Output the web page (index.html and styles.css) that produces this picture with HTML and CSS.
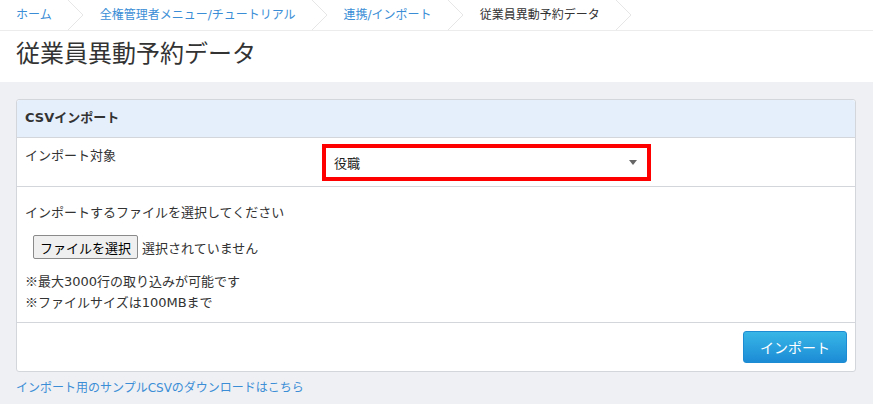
FILE: index.html
```html
<!DOCTYPE html>
<html lang="ja">
<head>
<meta charset="utf-8">
<link rel="stylesheet" href="styles.css">
</head>
<body>
<div class="top">
  <ol class="crumbs">
    <li><a href="#">ホーム</a><svg class="chev" width="15" height="30" viewBox="0 0 15 30"><path d="M0 0 L15 15 L0 30" fill="none" stroke="#e6e6e6" stroke-width="1"/></svg></li>
    <li><a href="#">全権管理者メニュー/チュートリアル</a><svg class="chev" width="15" height="30" viewBox="0 0 15 30"><path d="M0 0 L15 15 L0 30" fill="none" stroke="#e6e6e6" stroke-width="1"/></svg></li>
    <li><a href="#">連携/インポート</a><svg class="chev" width="15" height="30" viewBox="0 0 15 30"><path d="M0 0 L15 15 L0 30" fill="none" stroke="#e6e6e6" stroke-width="1"/></svg></li>
    <li><span class="current">従業員異動予約データ</span><svg class="chev" width="15" height="30" viewBox="0 0 15 30"><path d="M0 0 L15 15 L0 30" fill="none" stroke="#e6e6e6" stroke-width="1"/></svg></li>
  </ol>
  <h1 class="title">従業員異動予約データ</h1>
</div>
<div class="main">
  <div class="panel">
    <div class="panel-head">CSVインポート</div>
    <div class="row">
      <div class="label">インポート対象</div>
      <div class="select"><span>役職</span><span class="caret"></span></div>
    </div>
    <div class="body">
      <p class="lead">インポートするファイルを選択してください</p>
      <div class="file"><button class="file-btn" type="button">ファイルを選択</button><span class="file-none">選択されていません</span></div>
      <p class="note"><span class="mark">※</span>最大3000行の取り込みが可能です</p>
      <p class="note"><span class="mark">※</span>ファイルサイズは100MBまで</p>
    </div>
    <div class="foot"><button class="import" type="button">インポート</button></div>
  </div>
  <a class="sample" href="#">インポート用のサンプルCSVのダウンロードはこちら</a>
</div>
</body>
</html>
```
FILE: styles.css
```css
* { box-sizing: border-box; }
html, body { margin: 0; padding: 0; }
body {
  font-family: "DejaVu Sans", "Noto Sans CJK JP", sans-serif;
  color: #333;
  background: #eff0f4;
  font-size: 13px;
}
.top { background: #fff; height: 82px; }
.crumbs {
  list-style: none;
  margin: 0;
  padding: 0 0 0 16px;
  height: 31px;
  border-bottom: 1px solid #ececec;
  display: flex;
  align-items: center;
}
.crumbs li { display: flex; align-items: center; height: 30px; font-size: 12px; }
.crumbs li + li { margin-left: 17px; }
.crumbs a, .crumbs .current { padding-right: 16px; line-height: 30px; }
.crumbs a { color: #3b8ed6; text-decoration: none; }
.crumbs .current { color: #333; }
.chev { display: block; }
.title {
  margin: 0;
  padding: 0 16px;
  font-size: 24px;
  font-weight: normal;
  line-height: 46px;
  color: #333;
}
.main { padding: 17px 16px 0 16px; width: 872px; }
.panel {
  background: #fff;
  border: 1px solid #d3d6db;
  border-radius: 3px;
  width: 840px;
}
.panel-head {
  background: #e5effc;
  height: 38px;
  border-bottom: 1px solid #d3d6db;
  padding: 0 8px;
  font-weight: bold;
  line-height: 36px;
  border-radius: 3px 3px 0 0;
}
.row {
  display: flex;
  height: 49px;
  border-bottom: 1px solid #d3d6db;
  padding: 6px 8px 0 8px;
}
.label { width: 297px; line-height: 24px; }
.select {
  width: 329px;
  height: 37px;
  border: 4px solid #ff0000;
  display: flex;
  align-items: center;
  justify-content: space-between;
  padding: 0 10px 0 8px;
  color: #222;
  font-size: 13px;
}
.caret {
  width: 0; height: 0;
  border-left: 4px solid transparent;
  border-right: 4px solid transparent;
  border-top: 5px solid #666;
}
.body {
  padding: 16px 8px 10px 8px;
  border-bottom: 1px solid #d3d6db;
  height: 136px;
}
.body p { margin: 0; line-height: 20px; }
.mark { font-family: "Noto Sans CJK JP", sans-serif; }
.file { display: flex; align-items: center; margin: 12px 0 12px 8px; }
.file-btn {
  font-family: inherit;
  font-size: 13px;
  height: 24px;
  padding: 0 6px;
  background: #efefef;
  border: 1px solid #8a8a8a;
  border-radius: 2px;
  color: #000;
  margin-right: 4px;
}
.file-none { color: #333; }
.foot {
  height: 48px;
  display: flex;
  justify-content: flex-end;
  align-items: center;
  padding: 0 8px;
}
.import {
  font-family: inherit;
  width: 104px;
  height: 32px;
  border: 1px solid #1d8cd2;
  border-radius: 3px;
  background: linear-gradient(#38b6e6, #1c8cd6);
  color: #fff;
  font-size: 14px;
}
.sample {
  display: block;
  margin-top: 6px;
  font-size: 12px;
  color: #3b8ed6;
  text-decoration: none;
  line-height: 20px;
}
```
